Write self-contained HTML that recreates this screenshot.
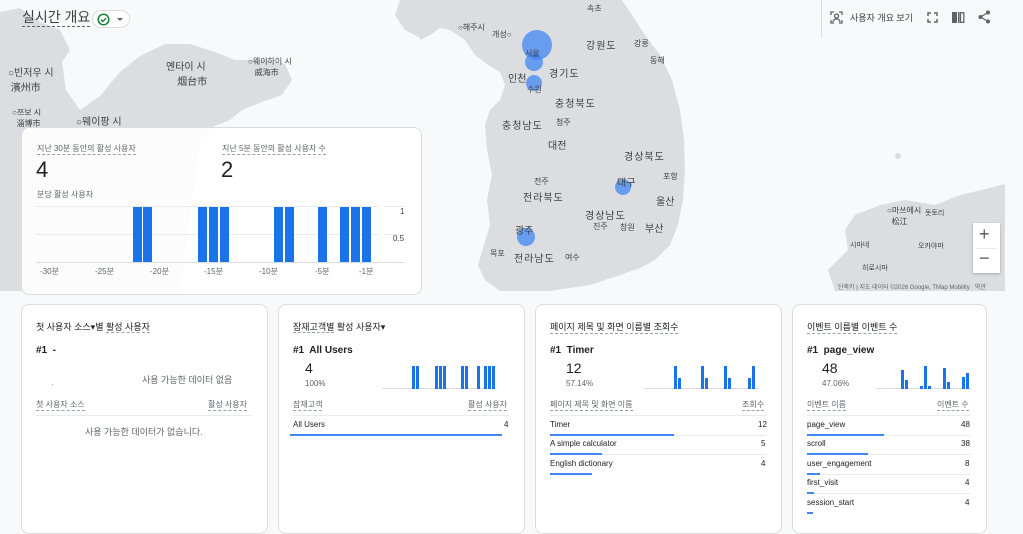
<!DOCTYPE html>
<html><head><meta charset="utf-8">
<style>
*{margin:0;padding:0;box-sizing:border-box}
body{width:1023px;height:516px;overflow:hidden;background:#f8f9fa;font-family:"Liberation Sans","Noto Sans CJK KR",sans-serif;color:#202124;position:relative}
.abs{position:absolute}
.t{position:absolute;white-space:nowrap}
.ml{font-size:8px;color:#3c4043}
.big{font-size:10px!important}
.card{position:absolute;background:#fff;border:1px solid #dadce0;border-radius:8px}
.dash{border-bottom:1px dashed #9aa0a6}
.sm{font-size:8px;color:#5f6368}
.b{position:absolute;background:#1a73e8}
.row{position:absolute;font-size:8px;color:#202124}
.sep{position:absolute;height:1px;background:#e8eaed}
.bar{position:absolute;height:2px;background:#4285f4}
</style></head><body>
<svg class="abs" style="left:0;top:0" width="1005" height="291" viewBox="0 0 1005 291">
<rect width="1005" height="291" fill="#f8f9fa"/>
<g fill="#dcdde0">
<polygon points="420,0 622,0 632,15 645,35 660,55 672,80 680,110 684,140 685,170 683,200 678,225 670,245 655,260 640,268 620,275 605,280 590,285 570,288 550,291 500,291 485,280 478,265 484,245 490,225 487,200 492,175 487,150 485,125 490,110 500,100 505,85 500,72 488,65 475,55 465,40 450,30 440,28 430,35 420,40"/>
<polygon points="0,12 20,8 40,22 60,30 70,50 62,62 66,90 80,110 100,96 120,72 140,56 165,44 190,44 215,52 235,60 265,60 285,64 292,80 282,95 262,102 242,110 230,120 212,127 200,140 180,291 0,291"/>
<polygon points="400,0 420,0 420,38 405,30 395,15"/>
<polygon points="855,215 880,205 905,200 935,205 960,195 990,188 1005,184 1005,291 835,291 828,270 848,250 845,230"/>
<circle cx="898" cy="156" r="3"/>
</g>
<g fill="#4285f4" fill-opacity="0.75">
<circle cx="537" cy="45" r="15"/><circle cx="534" cy="62" r="9"/><circle cx="534" cy="83" r="8"/><circle cx="623" cy="187" r="8"/><circle cx="526" cy="237" r="9"/>
</g>
</svg>
<div class="t ml big" style="left:8px;top:64px">○빈저우 시<br>&nbsp;濱州市</div>
<div class="t ml big" style="left:166px;top:58px">옌타이 시<br>&nbsp;&nbsp;&nbsp;&nbsp;烟台市</div>
<div class="t ml" style="left:248px;top:56px">○웨이하이 시<br>&nbsp;&nbsp;&nbsp;威海市</div>
<div class="t ml" style="left:12px;top:107px">○쯔보 시<br>&nbsp;&nbsp;淄博市</div>
<div class="t ml big" style="left:76px;top:113px">○웨이팡 시</div>
<div class="t ml" style="left:458px;top:22px">○해주시</div>
<div class="t ml" style="left:492px;top:29px">개성○</div>
<div class="t ml" style="left:587px;top:3px">속초</div>
<div class="t ml big" style="left:586px;top:37px;letter-spacing:1px">강원도</div>
<div class="t ml" style="left:634px;top:38px">강릉</div>
<div class="t ml" style="left:650px;top:55px">동해</div>
<div class="t ml" style="left:525px;top:48px">서울</div>
<div class="t ml big" style="left:508px;top:70px">인천</div>
<div class="t ml big" style="left:549px;top:65px;letter-spacing:1px">경기도</div>
<div class="t ml" style="left:527px;top:84px">수원</div>
<div class="t ml big" style="left:555px;top:95px;letter-spacing:1px">충청북도</div>
<div class="t ml big" style="left:502px;top:117px;letter-spacing:1px">충청남도</div>
<div class="t ml" style="left:556px;top:117px">청주</div>
<div class="t ml big" style="left:548px;top:137px">대전</div>
<div class="t ml big" style="left:624px;top:148px;letter-spacing:1px">경상북도</div>
<div class="t ml" style="left:534px;top:176px">전주</div>
<div class="t ml big" style="left:523px;top:189px;letter-spacing:1px">전라북도</div>
<div class="t ml big" style="left:617px;top:174px">대구</div>
<div class="t ml" style="left:663px;top:171px">포항</div>
<div class="t ml big" style="left:656px;top:193px">울산</div>
<div class="t ml big" style="left:585px;top:207px;letter-spacing:1px">경상남도</div>
<div class="t ml" style="left:593px;top:221px">진주</div>
<div class="t ml" style="left:620px;top:222px">창원</div>
<div class="t ml big" style="left:645px;top:220px">부산</div>
<div class="t ml big" style="left:515px;top:222px">광주</div>
<div class="t ml" style="left:490px;top:248px">목포</div>
<div class="t ml big" style="left:514px;top:250px;letter-spacing:1px">전라남도</div>
<div class="t ml" style="left:565px;top:252px">여수</div>
<div class="t ml" style="left:887px;top:205px">○마쓰에시<br>&nbsp;&nbsp;松江</div>
<div class="t ml" style="left:925px;top:208px;font-size:7px">돗토리</div>
<div class="t ml" style="left:850px;top:240px;font-size:7px">시마네</div>
<div class="t ml" style="left:918px;top:241px;font-size:7px">오카야마</div>
<div class="t ml" style="left:862px;top:263px;font-size:7px">히로시마</div>
<div class="t" style="left:838px;top:282px;font-size:6px;color:#5f6368">단축키 | 지도 데이터 ©2026 Google, TMap Mobility &nbsp;&nbsp;약관</div>
<div class="abs" style="left:973px;top:223px;width:27px;height:50px;background:#fff;box-shadow:0 1px 3px rgba(0,0,0,.25)">
<div class="t" style="left:6px;top:1px;font-size:18px;color:#555">+</div>
<div class="abs" style="left:3px;top:25px;width:21px;height:1px;background:#e8eaed"></div>
<div class="t" style="left:6px;top:25px;font-size:18px;color:#555">−</div>
</div>
<div class="t" style="left:22px;top:8px;font-size:14px;color:#3c4043;border-bottom:1px dashed #5f6368;line-height:18px">실시간 개요</div>
<div class="abs" style="left:92px;top:10px;width:38px;height:18px;border:1px solid #dadce0;border-radius:9px;background:#fff">
<svg class="abs" style="left:4px;top:2px" width="13" height="13" viewBox="0 0 13 13"><circle cx="6.5" cy="6.5" r="5.3" fill="none" stroke="#188038" stroke-width="1.5"/><path d="M4 6.7l1.8 1.8 3.3-3.4" fill="none" stroke="#188038" stroke-width="1.4"/></svg>
<div class="abs" style="left:24px;top:7px;border-left:3px solid transparent;border-right:3px solid transparent;border-top:3px solid #5f6368"></div>
</div>
<div class="abs" style="left:821px;top:0;width:1px;height:38px;background:#dadce0"></div>
<svg class="abs" style="left:830px;top:11px" width="13" height="13" viewBox="0 0 13 13" fill="none" stroke="#5f6368" stroke-width="1.3"><path d="M1 4V1h3M9 1h3v3M12 9v3H9M4 12H1V9"/><circle cx="6.5" cy="5" r="2"/><path d="M3 11c0-2 2-3 3.5-3s3.5 1 3.5 3"/></svg>
<div class="t" style="left:850px;top:11px;font-size:9px;color:#3c4043">사용자 개요 보기</div>
<svg class="abs" style="left:927px;top:12px" width="11" height="11" viewBox="0 0 11 11" fill="none" stroke="#5f6368" stroke-width="1.5"><path d="M1 4V1h3M7 1h3v3M10 7v3H7M4 10H1V7"/></svg>
<svg class="abs" style="left:951px;top:11px" width="14" height="13" viewBox="0 0 14 13"><rect x="1" y="1" width="5" height="11" fill="#5f6368"/><rect x="7" y="1" width="1.5" height="11" fill="#5f6368"/><rect x="9.5" y="1.7" width="3.3" height="9.6" fill="none" stroke="#5f6368" stroke-width="1.3"/></svg>
<svg class="abs" style="left:978px;top:10px" width="13" height="14" viewBox="0 0 13 14" fill="#5f6368"><circle cx="10" cy="2.5" r="2"/><circle cx="2.5" cy="7" r="2"/><circle cx="10" cy="11.5" r="2"/><path d="M2.5 7L10 2.5M2.5 7L10 11.5" stroke="#5f6368" stroke-width="1.2"/></svg>

<div class="card" style="left:21px;top:127px;width:401px;height:168px;background:rgba(255,255,255,0.9)"></div>
<div class="t sm dash" style="left:37px;top:143px">지난 30분 동안의 활성 사용자</div>
<div class="t" style="left:36px;top:157px;font-size:22px;color:#202124">4</div>
<div class="t sm dash" style="left:222px;top:143px">지난 5분 동안의 활성 사용자 수</div>
<div class="t" style="left:221px;top:157px;font-size:22px;color:#202124">2</div>
<div class="t sm" style="left:37px;top:189px">분당 활성 사용자</div>
<div class="abs" style="left:36px;top:206px;width:343px;height:1px;background:#e8eaed"></div>
<div class="abs" style="left:36px;top:234px;width:343px;height:1px;background:#e8eaed"></div>
<div class="abs" style="left:36px;top:262px;width:369px;height:1px;background:#dadce0"></div>
<div class="abs" style="left:384px;top:206px;width:21px;height:1px;background:#e8eaed"></div>
<div class="abs" style="left:384px;top:234px;width:21px;height:1px;background:#e8eaed"></div>
<div class="b" style="left:133px;top:207px;width:9px;height:55px"></div>
<div class="b" style="left:143px;top:207px;width:9px;height:55px"></div>
<div class="b" style="left:198px;top:207px;width:9px;height:55px"></div>
<div class="b" style="left:209px;top:207px;width:9px;height:55px"></div>
<div class="b" style="left:220px;top:207px;width:9px;height:55px"></div>
<div class="b" style="left:274px;top:207px;width:9px;height:55px"></div>
<div class="b" style="left:285px;top:207px;width:9px;height:55px"></div>
<div class="b" style="left:318px;top:207px;width:9px;height:55px"></div>
<div class="b" style="left:340px;top:207px;width:9px;height:55px"></div>
<div class="b" style="left:351px;top:207px;width:9px;height:55px"></div>
<div class="b" style="left:362px;top:207px;width:9px;height:55px"></div>
<div class="t sm" style="left:400px;top:207px;color:#3c4043">1</div>
<div class="t sm" style="left:393px;top:234px;color:#3c4043">0.5</div>
<div class="t sm" style="left:40px;top:266px">-30분</div>
<div class="t sm" style="left:95px;top:266px">-25분</div>
<div class="t sm" style="left:150px;top:266px">-20분</div>
<div class="t sm" style="left:204px;top:266px">-15분</div>
<div class="t sm" style="left:259px;top:266px">-10분</div>
<div class="t sm" style="left:315px;top:266px">-5분</div>
<div class="t sm" style="left:359px;top:266px">-1분</div>

<div class="card" style="left:21px;top:304px;width:247px;height:230px"></div>
<div class="t" style="left:36px;top:320px;font-size:9px">첫 사용자 소스▾별 <span class="dash">활성 사용자</span></div>
<div class="t" style="left:36px;top:345px;font-size:10px;font-weight:bold">#1&nbsp; -</div>
<div class="t" style="left:142px;top:373px;font-size:9px;color:#5f6368">사용 가능한 데이터 없음</div>
<div class="abs" style="left:52px;top:384px;width:1px;height:1px;background:#999"></div>
<div class="t sm dash" style="left:36px;top:399px">첫 사용자 소스</div>
<div class="t sm dash" style="left:208px;top:399px">활성 사용자</div>
<div class="sep" style="left:36px;top:415px;width:216px"></div>
<div class="t" style="left:85px;top:425px;font-size:9px;color:#5f6368">사용 가능한 데이터가 없습니다.</div>

<div class="card" style="left:278px;top:304px;width:247px;height:230px"></div>
<div class="t" style="left:293px;top:320px;font-size:9px"><span class="dash">잠재고객별</span> 활성 사용자▾</div>
<div class="t" style="left:293px;top:345px;font-size:10px;font-weight:bold">#1&nbsp; All Users</div>
<div class="t" style="left:305px;top:360px;font-size:14px">4</div>
<div class="t sm" style="left:305px;top:379px">100%</div>
<div class="abs" style="left:382px;top:388px;width:113px;height:1px;background:#dadce0"></div>
<div class="b" style="left:412px;top:366px;width:3px;height:23px"></div><div class="b" style="left:416px;top:366px;width:3px;height:23px"></div>
<div class="b" style="left:435px;top:366px;width:3px;height:23px"></div><div class="b" style="left:439px;top:366px;width:3px;height:23px"></div><div class="b" style="left:443px;top:366px;width:3px;height:23px"></div>
<div class="b" style="left:461px;top:366px;width:3px;height:23px"></div><div class="b" style="left:465px;top:366px;width:3px;height:23px"></div>
<div class="b" style="left:477px;top:366px;width:3px;height:23px"></div>
<div class="b" style="left:484px;top:366px;width:3px;height:23px"></div><div class="b" style="left:488px;top:366px;width:3px;height:23px"></div><div class="b" style="left:492px;top:366px;width:3px;height:23px"></div>
<div class="t sm dash" style="left:293px;top:399px">잠재고객</div>
<div class="t sm dash" style="left:468px;top:399px">활성 사용자</div>
<div class="sep" style="left:293px;top:415px;width:216px"></div>
<div class="row" style="left:293px;top:420px">All Users</div><div class="row" style="left:504px;top:420px">4</div>
<div class="bar" style="left:290px;top:434px;width:212px"></div>

<div class="card" style="left:535px;top:304px;width:247px;height:230px"></div>
<div class="t dash" style="left:550px;top:320px;font-size:9px">페이지 제목 및 화면 이름별 조회수</div>
<div class="t" style="left:550px;top:345px;font-size:10px;font-weight:bold">#1&nbsp; Timer</div>
<div class="t" style="left:566px;top:360px;font-size:14px">12</div>
<div class="t sm" style="left:566px;top:379px">57.14%</div>
<div class="abs" style="left:643px;top:388px;width:116px;height:1px;background:#dadce0"></div>
<div class="b" style="left:674px;top:366px;width:3px;height:23px"></div><div class="b" style="left:678px;top:378px;width:3px;height:11px"></div>
<div class="b" style="left:701px;top:366px;width:3px;height:23px"></div><div class="b" style="left:705px;top:378px;width:3px;height:11px"></div>
<div class="b" style="left:724px;top:366px;width:3px;height:23px"></div><div class="b" style="left:728px;top:378px;width:3px;height:11px"></div>
<div class="b" style="left:748px;top:378px;width:3px;height:11px"></div><div class="b" style="left:752px;top:366px;width:3px;height:23px"></div>
<div class="t sm dash" style="left:550px;top:399px">페이지 제목 및 화면 이름</div>
<div class="t sm dash" style="left:742px;top:399px">조회수</div>
<div class="sep" style="left:550px;top:415px;width:216px"></div>
<div class="row" style="left:550px;top:420px">Timer</div><div class="row" style="left:758px;top:420px">12</div>
<div class="sep" style="left:550px;top:435px;width:216px"></div>
<div class="bar" style="left:550px;top:434px;width:124px"></div>
<div class="row" style="left:550px;top:439px">A simple calculator</div><div class="row" style="left:761px;top:439px">5</div>
<div class="sep" style="left:550px;top:454px;width:216px"></div>
<div class="bar" style="left:550px;top:453px;width:52px"></div>
<div class="row" style="left:550px;top:459px">English dictionary</div><div class="row" style="left:761px;top:459px">4</div>
<div class="bar" style="left:550px;top:473px;width:42px"></div>

<div class="card" style="left:792px;top:304px;width:195px;height:230px"></div>
<div class="t dash" style="left:807px;top:320px;font-size:9px">이벤트 이름별 이벤트 수</div>
<div class="t" style="left:807px;top:345px;font-size:10px;font-weight:bold">#1&nbsp; page_view</div>
<div class="t" style="left:822px;top:360px;font-size:14px">48</div>
<div class="t sm" style="left:822px;top:379px">47.06%</div>
<div class="abs" style="left:875px;top:388px;width:96px;height:1px;background:#dadce0"></div>
<div class="b" style="left:901px;top:370px;width:3px;height:19px"></div><div class="b" style="left:905px;top:380px;width:3px;height:9px"></div>
<div class="b" style="left:920px;top:386px;width:3px;height:3px"></div><div class="b" style="left:924px;top:366px;width:3px;height:23px"></div><div class="b" style="left:928px;top:386px;width:3px;height:3px"></div>
<div class="b" style="left:943px;top:368px;width:3px;height:21px"></div><div class="b" style="left:947px;top:382px;width:3px;height:7px"></div>
<div class="b" style="left:962px;top:377px;width:3px;height:12px"></div><div class="b" style="left:966px;top:373px;width:3px;height:16px"></div>
<div class="t sm dash" style="left:807px;top:399px">이벤트 이름</div>
<div class="t sm dash" style="left:937px;top:399px">이벤트 수</div>
<div class="sep" style="left:807px;top:415px;width:164px"></div>
<div class="row" style="left:807px;top:420px">page_view</div><div class="row" style="left:961px;top:420px">48</div>
<div class="sep" style="left:807px;top:435px;width:164px"></div>
<div class="bar" style="left:807px;top:434px;width:77px"></div>
<div class="row" style="left:807px;top:439px">scroll</div><div class="row" style="left:961px;top:439px">38</div>
<div class="sep" style="left:807px;top:454px;width:164px"></div>
<div class="bar" style="left:807px;top:453px;width:61px"></div>
<div class="row" style="left:807px;top:459px">user_engagement</div><div class="row" style="left:965px;top:459px">8</div>
<div class="sep" style="left:807px;top:474px;width:164px"></div>
<div class="bar" style="left:807px;top:473px;width:13px"></div>
<div class="row" style="left:807px;top:478px">first_visit</div><div class="row" style="left:965px;top:478px">4</div>
<div class="sep" style="left:807px;top:493px;width:164px"></div>
<div class="bar" style="left:807px;top:492px;width:7px"></div>
<div class="row" style="left:807px;top:498px">session_start</div><div class="row" style="left:965px;top:498px">4</div>
<div class="bar" style="left:807px;top:512px;width:6px"></div>
</body></html>
